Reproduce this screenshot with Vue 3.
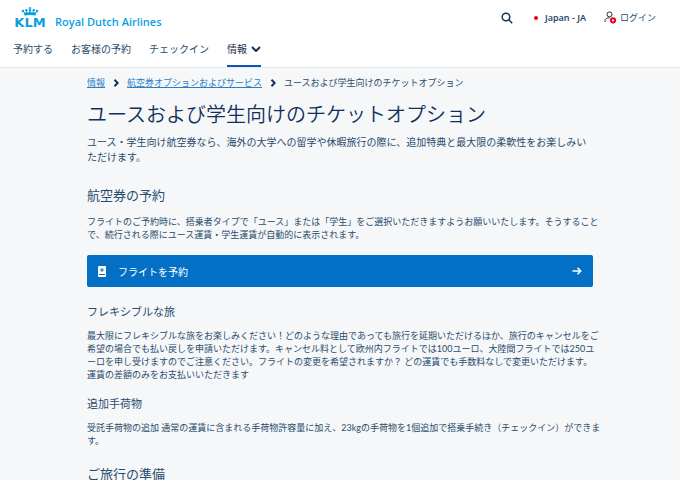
<script setup>
const nav = ['予約する', 'お客様の予約', 'チェックイン']
</script>

<template>
  <div class="page">
    <header>
      <div class="top">
        <a class="brand" href="#">
          <span class="mark">
            <svg class="crown" viewBox="0 0 18 9" aria-hidden="true">
              <path d="M3 6.3Q9 4.9 15 6.3L14.6 8.4Q9 7.4 3.4 8.4Z" />
              <circle cx="1.9" cy="4" r="1.2" /><circle cx="5.3" cy="3.3" r="1.2" />
              <circle cx="9" cy="3.3" r="1.2" /><circle cx="12.7" cy="3.3" r="1.2" />
              <circle cx="16.1" cy="4" r="1.2" /><path d="M8.4 0h1.2v.7h.8v1H7.6v-1h.8z" />
              <path d="M2 4L3.300 7H14.700L16 4L13.500 6L12.700 4L11 6L9 4L7 6L5.300 4L4.500 6Z" />
            </svg>
            <strong>KLM</strong>
          </span>
          <span class="name">Royal Dutch Airlines</span>
        </a>
        <div class="tools">
          <button class="search" aria-label="検索">
            <svg viewBox="0 0 12 12"><circle cx="5" cy="5" r="3.8" /><path d="M7.8 7.8l3.4 3.4" /></svg>
          </button>
          <button class="locale"><i></i>Japan - JA</button>
          <a class="login" href="#">
            <svg viewBox="0 0 13 13" aria-hidden="true">
              <circle cx="5.5" cy="3.4" r="2.5" /><path d="M1 11V9.8C1 7.8 2.5 6.9 5.5 6.9" />
              <circle class="ring" cx="9" cy="9.3" r="2.1" />
            </svg>ログイン
          </a>
        </div>
      </div>
      <nav>
        <a v-for="item in nav" :key="item" href="#">{{ item }}</a>
        <a class="active" href="#">情報
          <svg viewBox="0 0 10 6" aria-hidden="true"><path d="M1 1l4 4 4-4" /></svg>
        </a>
      </nav>
    </header>

    <main>
      <div class="crumbs">
        <a href="#">情報</a>
        <svg viewBox="0 0 6 8" aria-hidden="true"><path d="M1.5 .8L4.7 4 1.5 7.2" /></svg>
        <a href="#">航空券オプションおよびサービス</a>
        <svg viewBox="0 0 6 8" aria-hidden="true"><path d="M1.5 .8L4.7 4 1.5 7.2" /></svg>
        <span>ユースおよび学生向けのチケットオプション</span>
      </div>
      <h1>ユースおよび学生向けのチケットオプション</h1>
      <p class="intro">ユース・学生向け航空券なら、海外の大学への留学や休暇旅行の際に、追加特典と最大限の柔軟性をお楽しみい<br>ただけます。</p>

      <h2>航空券の予約</h2>
      <p>フライトのご予約時に、搭乗者タイプで「ユース」または「学生」をご選択いただきますようお願いいたします。そうすること<br>で、続行される際にユース運賃・学生運賃が自動的に表示されます。</p>
      <button class="book">
        <svg class="ticket" viewBox="0 0 8 11" aria-hidden="true">
          <rect width="8" height="11" rx="1" fill="#fff" />
          <path d="M4 2v4M2 4h4M1 8.5h6" stroke="#0470c5" />
        </svg>
        <span>フライトを予約</span>
        <svg class="arrow" viewBox="0 0 10 8" aria-hidden="true"><path d="M.5 4h8M5.5 .8L8.7 4 5.5 7.2" /></svg>
      </button>

      <h3>フレキシブルな旅</h3>
      <p>最大限にフレキシブルな旅をお楽しみください！どのような理由であっても旅行を延期いただけるほか、旅行のキャンセルをご<br>希望の場合でも払い戻しを申請いただけます。キャンセル料として欧州内フライトでは100ユーロ、大陸間フライトでは250ユ<br>ーロを申し受けますのでご注意ください。フライトの変更を希望されますか？ どの運賃でも手数料なしで変更いただけます。<br>運賃の差額のみをお支払いいただきます</p>
      <h3>追加手荷物</h3>
      <p>受託手荷物の追加 通常の運賃に含まれる手荷物許容量に加え、23kgの手荷物を1個追加で搭乗手続き（チェックイン）ができま<br>す。</p>
      <h2 class="last">ご旅行の準備</h2>
    </main>
  </div>
</template>

<style>
body { margin: 0; background: #f6f7f9; }
</style>

<style scoped>
.page { font-family: Lato, "Noto Sans CJK JP", sans-serif; font-size: 9px; color: #284c6c; }
a { color: inherit; text-decoration: none; }
button { border: 0; padding: 0; background: none; font: inherit; color: inherit; }
svg { fill: none; stroke: #14314f; flex: none; }
header { background: #fff; border-bottom: 1px solid #e6e9ea; }
.top { display: flex; justify-content: space-between; align-items: flex-start; height: 36px; padding: 0 24px 0 13px; }
.brand { display: flex; align-items: flex-end; gap: 8px; color: #0a9fdd; padding-top: 7px; }
.mark { display: flex; flex-direction: column; align-items: center; width: 34px; }
.crown { width: 18px; height: 9px; fill: #0a9fdd; stroke: none; }
.mark strong { font: bold 13px/13px "DejaVu Sans", sans-serif; }
.name { font: 600 11px/14px "Open Sans", sans-serif; }
.tools { display: flex; align-items: center; padding-top: 11px; }
.tools > * { display: flex; align-items: center; height: 13px; }
.search svg { width: 12px; height: 12px; stroke-width: 1.5; }
.locale { gap: 7px; margin-left: 21px; font: 600 9px/13px "Noto Sans", sans-serif; }
.locale i { width: 4px; height: 4px; border-radius: 50%; background: #f00014; }
.login { margin-left: 18px; gap: 3px; }
.login svg { width: 13px; height: 13px; }
.login .ring { stroke: #f00014; stroke-width: 2; fill: #fff; }
nav { display: flex; gap: 18px; padding: 0 13px; font-size: 10px; }
nav a { display: flex; align-items: center; height: 26px; line-height: 26px; padding-bottom: 3px; border-bottom: 2px solid transparent; }
nav .active { gap: 4px; border-color: #0a55b5; color: #14314f; }
nav svg { width: 10px; height: 6px; stroke-width: 2; }
main { padding: 8px 87px 0; }
.crumbs { display: flex; align-items: center; gap: 8px; line-height: 13px; white-space: nowrap; }
.crumbs a { color: #2a7fc4; text-decoration: underline; }
.crumbs svg { width: 6px; height: 8px; stroke-width: 2; }
h1, h2, h3, p { margin: 0; white-space: nowrap; }
h1 { font-size: 20px; line-height: 28px; font-weight: 350; color: #10305a; margin-top: 11px; }
p { line-height: 13px; }
.intro { font-size: 10px; line-height: 15px; margin-top: 7px; }
h2 { font-size: 13px; line-height: 18px; font-weight: 400; margin: 21px 0 11px; }
.book { display: flex; align-items: center; width: 100%; height: 32px; margin-top: 14px; padding: 0 11px; border-radius: 2px; background: #0470c5; color: #fff; font-size: 10px; }
.ticket { width: 8px; height: 11px; stroke: none; margin-right: 12px; }
.arrow { width: 10px; height: 8px; stroke: #fff; stroke-width: 1.5; margin-left: auto; }
h3 { font-size: 11px; line-height: 16px; font-weight: 400; margin: 17px 0 9px; }
p + h3 { margin-top: 15px; }
.last { margin-top: 18px; margin-bottom: 0; }
</style>
